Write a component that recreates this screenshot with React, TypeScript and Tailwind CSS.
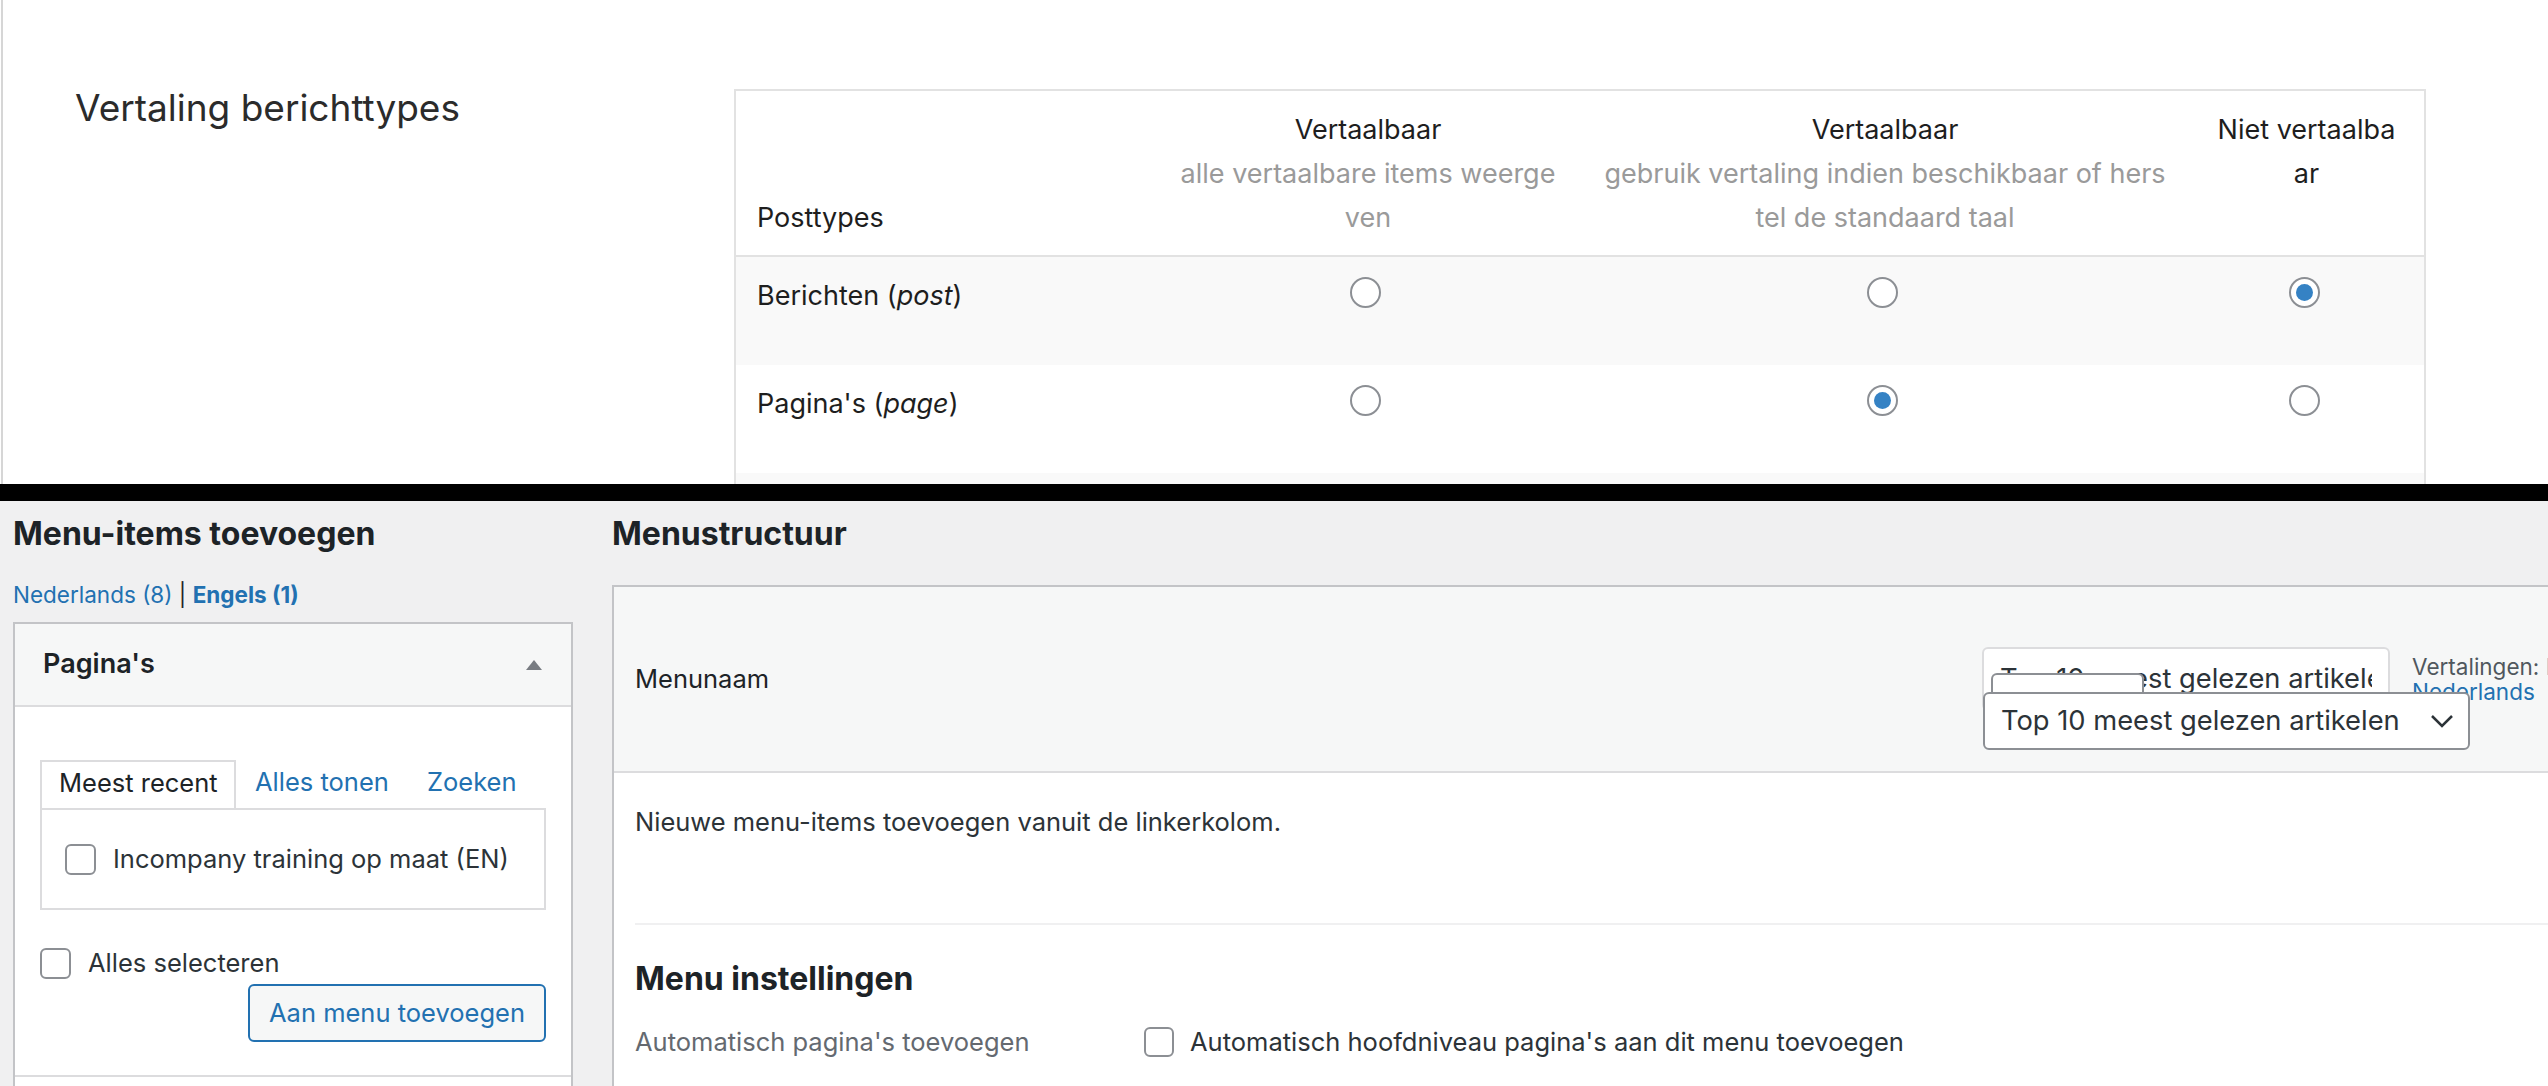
import React from "react";

const Radio = ({ checked }: { checked?: boolean }) => (
  <span className="w-[31px] h-[31px] rounded-full border-2 border-[#8c8f94] bg-white flex items-center justify-center shrink-0">
    {checked && <span className="w-[17px] h-[17px] rounded-full bg-[#3582c4]" />}
  </span>
);

const Checkbox = ({ size = 31 }: { size?: number }) => (
  <span
    className={
      size === 31
        ? "w-[31px] h-[31px] rounded-[6px] border-2 border-[#8c8f94] bg-white shrink-0 block"
        : "w-[30px] h-[30px] rounded-[6px] border-2 border-[#8c8f94] bg-white shrink-0 block"
    }
  />
);

function TopSection() {
  const rows = [
    { label: "Berichten", slug: "post", sel: 2, bg: "bg-[#f9f9f9]" },
    { label: "Pagina's", slug: "page", sel: 1, bg: "bg-white" },
  ];
  return (
    <div className="h-[484px] bg-white pl-[1px] overflow-hidden">
      <div className="h-full border-l-2 border-[#d6d6d6] flex items-start">
        <div className="w-[731px] shrink-0 pl-[72px] pt-[84px] text-[37px] leading-[48px] text-[#2b2b2b]">
          Vertaling berichttypes
        </div>
        <div className="mt-[89px] w-[1692px] shrink-0 border-2 border-[#e2e2e2] text-[27px] leading-[44px] text-[#1e1e1e]">
          <div className="grid grid-cols-[419px_426px_608px_235px] pt-[17px] pb-[15px] border-b-2 border-[#e2e2e2]">
            <div className="self-end pl-[21px]">Posttypes</div>
            <div className="text-center whitespace-nowrap">
              <div>Vertaalbaar</div>
              <div className="text-[#9a9a9a]">alle vertaalbare items weerge</div>
              <div className="text-[#9a9a9a]">ven</div>
            </div>
            <div className="text-center whitespace-nowrap">
              <div>Vertaalbaar</div>
              <div className="text-[#9a9a9a]">gebruik vertaling indien beschikbaar of hers</div>
              <div className="text-[#9a9a9a]">tel de standaard taal</div>
            </div>
            <div className="text-center whitespace-nowrap">
              <div>Niet vertaalba</div>
              <div>ar</div>
            </div>
          </div>
          {rows.map((r) => (
            <div key={r.slug} className={"grid grid-cols-[419px_426px_608px_235px] h-[108px] " + r.bg}>
              <div className="pl-[21px] pt-[17px]">
                {r.label} (<i>{r.slug}</i>)
              </div>
              {[0, 1, 2].map((i) => (
                <div key={i} className="flex justify-center pt-[20px] pr-[5px]">
                  <Radio checked={r.sel === i} />
                </div>
              ))}
            </div>
          ))}
          <div className="h-[40px] bg-[#f9f9f9]" />
        </div>
      </div>
    </div>
  );
}

function LeftColumn() {
  return (
    <div className="w-[573px] shrink-0 pl-[13px] pt-[12px]">
      <h2 className="text-[32px] font-bold leading-[42px] text-[#1d2327]">Menu-items toevoegen</h2>
      <p className="mt-[25px] text-[22.5px] leading-[30px] text-[#1d2327] whitespace-nowrap">
        <span className="text-[#2271b1]">Nederlands (8)</span> | <span className="font-bold text-[#2271b1]">Engels (1)</span>
      </p>
      <div className="mt-[12px] border-2 border-[#c3c4c7] bg-white">
        <div className="h-[83px] bg-[#f6f7f7] border-b-2 border-[#dcdcde] flex items-center justify-between pl-[28px] pr-[29px]">
          <span className="text-[27px] font-semibold text-[#1d2327]">Pagina's</span>
          <svg width="16" height="10" viewBox="0 0 16 10">
            <polygon points="8,0 16,10 0,10" fill="#787c82" />
          </svg>
        </div>
        <div className="pt-[53px] px-[25px] pb-[33px] border-b-2 border-[#dcdcde] text-[25.5px] text-[#2c3338]">
          <div className="flex items-end h-[48px]">
            <div className="w-[196px] h-[48px] border-2 border-b-0 border-[#dcdcde] flex items-center pl-[17px] pb-[3px] text-[#1d2327]">
              Meest recent
            </div>
            <div className="w-[191px] h-[48px] flex items-center pl-[19px] pb-[3px] text-[#2271b1]">Alles tonen</div>
            <div className="h-[48px] flex items-center pb-[3px] text-[#2271b1]">Zoeken</div>
          </div>
          <div className="h-[102px] border-2 border-[#dcdcde] flex items-center pl-[23px] gap-[17px]">
            <Checkbox />
            <span>Incompany training op maat (EN)</span>
          </div>
          <div className="mt-[38px] h-[31px] flex items-center gap-[17px]">
            <Checkbox />
            <span>Alles selecteren</span>
          </div>
          <div className="mt-[5px] flex justify-end">
            <div className="h-[58px] w-[298px] rounded-[6px] border-2 border-[#2271b1] bg-[#f6f7f7] text-[#2271b1] flex items-center justify-center">
              Aan menu toevoegen
            </div>
          </div>
        </div>
        <div className="h-[20px] bg-white" />
      </div>
    </div>
  );
}

function RightColumn() {
  return (
    <div className="ml-[39px] pt-[12px] shrink-0">
      <h2 className="text-[32px] font-bold leading-[42px] text-[#1d2327]">Menustructuur</h2>
      <div className="mt-[30px] w-[1960px] border-l-2 border-t-2 border-[#c3c4c7]">
        <div className="h-[186px] bg-[#f6f7f7] border-b-2 border-[#dcdcde] flex items-center pl-[21px]">
          <div className="w-[1347px] shrink-0 text-[25.5px] text-[#1d2327]">Menunaam</div>
          <div className="relative w-[408px] h-[64px] shrink-0 border-2 border-[#dcdcde] rounded-[6px] bg-white flex items-center pl-[16px] overflow-visible">
            <div className="w-[372px] overflow-hidden whitespace-nowrap text-[27.3px] text-[#2c3338]">
              Top 10 meest gelezen artikelen
            </div>
            <div className="absolute left-[7px] top-[24px] w-[153px] h-[22px] border-2 border-b-0 border-[#8c8f94] rounded-t-[6px] bg-white z-10" />
            <div className="absolute left-[-1px] top-[43px] w-[487px] h-[58px] border-2 border-[#8c8f94] rounded-[6px] bg-white z-20 flex items-center pl-[16px] pr-[14px] justify-between">
              <span className="text-[27.3px] text-[#2c3338] whitespace-nowrap">Top 10 meest gelezen artikelen</span>
              <svg width="24" height="14" viewBox="0 0 24 14" fill="none">
                <polyline points="2,2 12,12 22,2" stroke="#2c3338" strokeWidth="2.5" />
              </svg>
            </div>
          </div>
          <div className="ml-[22px] text-[22.5px] leading-[25px] whitespace-nowrap">
            <div className="text-[#50575e]">
              Vertalingen: <span className="text-[#2271b1]">Engels</span>
            </div>
            <div className="text-[#2271b1]">Nederlands</div>
          </div>
        </div>
        <div className="h-[400px] bg-white pl-[21px] pt-[29px] text-[25.5px] text-[#2c3338]">
          <p className="leading-[40px]">Nieuwe menu-items toevoegen vanuit de linkerkolom.</p>
          <div className="mt-[81px] h-[2px] bg-[#f0f0f1]" />
          <h3 className="mt-[34px] text-[32px] font-bold leading-[40px] text-[#1d2327]">Menu instellingen</h3>
          <div className="mt-[23px] h-[40px] flex items-center">
            <span className="w-[509px] shrink-0 text-[#646970]">Automatisch pagina's toevoegen</span>
            <Checkbox size={30} />
            <span className="ml-[16px]">Automatisch hoofdniveau pagina's aan dit menu toevoegen</span>
          </div>
        </div>
      </div>
    </div>
  );
}

export default function App() {
  return (
    <div className="w-[2548px] h-[1086px] overflow-hidden bg-[#f0f0f1] font-['Inter','Liberation_Sans',sans-serif]">
      <TopSection />
      <div className="h-[17px] bg-black" />
      <div className="h-[585px] flex overflow-hidden">
        <LeftColumn />
        <RightColumn />
      </div>
    </div>
  );
}
